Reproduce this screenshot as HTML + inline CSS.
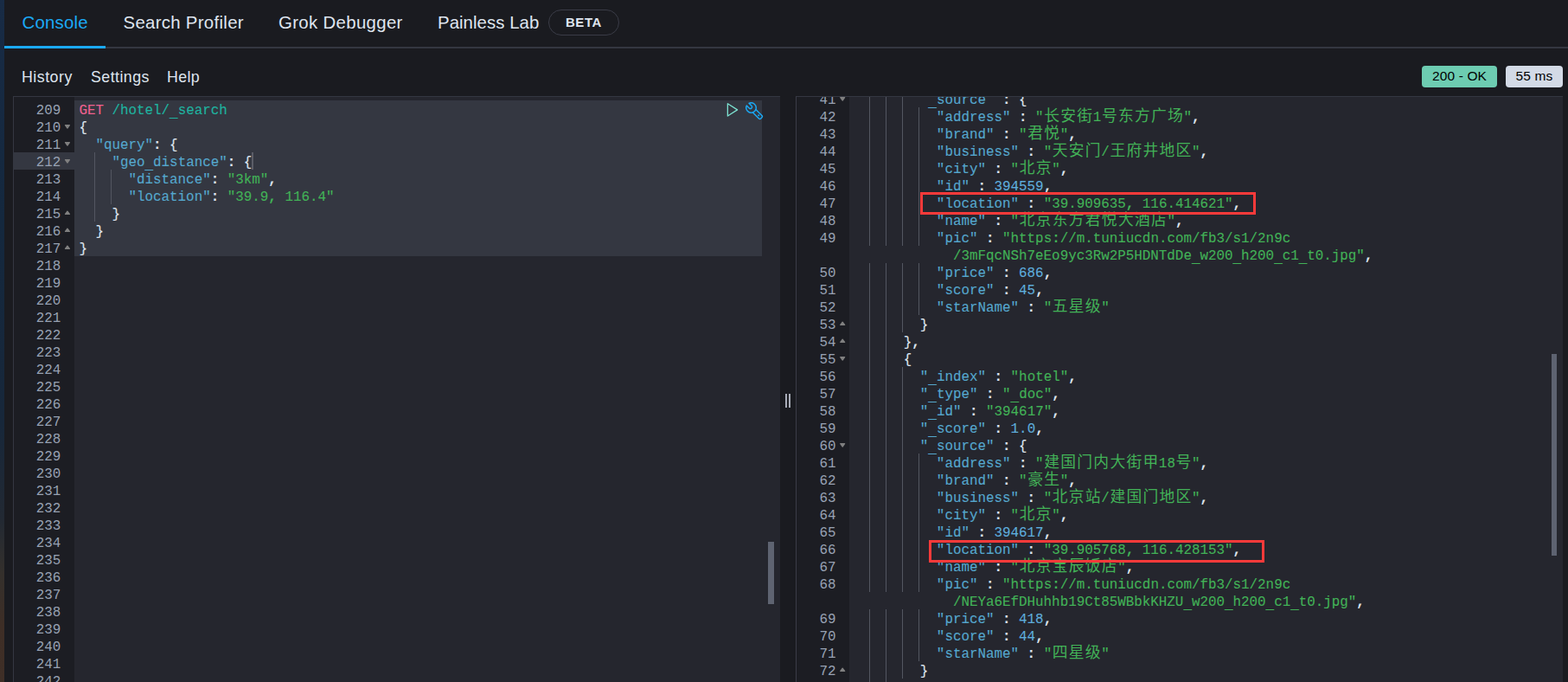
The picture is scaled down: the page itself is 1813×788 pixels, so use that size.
<!DOCTYPE html>
<html><head><meta charset="utf-8"><title>Dev Tools - Console</title>
<style>
*{box-sizing:border-box}
html,body{margin:0;padding:0}
body{width:1813px;height:788px;overflow:hidden;background:#1a1b20;position:relative;font-family:"Liberation Sans",sans-serif;color:#dfe5ef}
.abs{position:absolute}
.strip{position:absolute;left:0;top:0;width:5px;height:788px;background:linear-gradient(180deg,#182b45 0%,#14283e 32%,#17273a 62%,#222933 76%,#34302c 84%,#3e2e26 92%,#3f2f27 100%)}
.tab{position:absolute;top:12px;height:28px;line-height:28px;font-size:20.4px;color:#dfe5ef;white-space:nowrap;transform-origin:0 50%}
.sub{position:absolute;top:77px;height:24px;line-height:24px;font-size:17.8px;color:#dfe5ef;white-space:nowrap;transform-origin:0 50%}
.mono,.ln,.cl{font-family:"Liberation Mono",monospace;font-size:15.865px;line-height:20px;white-space:pre}
.ln{position:absolute;height:20px;text-align:right;color:#98a2b3;margin-top:2px}
.cl{position:absolute;height:20px;color:#dfe5ef;margin-top:2px;-webkit-text-stroke:0.12px currentColor}
.cl span{display:inline}
.g{color:#f0618f}.u{color:#1fb3a0}.k{color:#55a8ce}.s{color:#42b257}.p{color:#dfe5ef}.v{color:#5eaddc}
.cj{display:inline-block;width:19.04px;height:20px;vertical-align:top;position:relative;font-style:normal;font-family:"Liberation Mono","Noto Sans CJK SC",monospace;font-size:17.8px;line-height:19px;text-align:center;color:#42b257;overflow:visible;-webkit-text-stroke:0}
.cl u{text-decoration:none;position:relative;top:2.5px}
.cl b{font-weight:bold}
.gd{position:absolute;width:1px;height:20px;background:#535661}
.fold{position:absolute;fill:#808080;stroke:#808080;stroke-width:1.2;stroke-linejoin:round;pointer-events:none}
.actg{position:absolute;left:16px;width:70px;height:20px;background:#343741}
.pane{position:absolute;overflow:hidden}
.red{position:absolute;border:3px solid #fb3a3a}
</style></head>
<body>
<div class="strip"></div>

<!-- tabs -->
<div class="abs" style="left:5px;top:54px;width:1808px;height:2px;background:#343741"></div>
<div class="abs" style="left:5px;top:53px;width:117px;height:3px;background:#1ba9f5"></div>
<div class="tab" id="t1" style="left:25.5px;color:#1ba9f5;letter-spacing:0.2px">Console</div>
<div class="tab" id="t2" style="left:142.5px;letter-spacing:0.3px">Search Profiler</div>
<div class="tab" id="t3" style="left:322px;letter-spacing:0.33px">Grok Debugger</div>
<div class="tab" id="t4" style="left:506px;letter-spacing:0.05px">Painless Lab</div>
<div class="abs" id="beta" style="left:634px;top:11px;width:82px;height:30px;border:1px solid #3a3c47;border-radius:15px;font-size:15px;font-weight:bold;line-height:28px;text-align:center;letter-spacing:0.6px;color:#dfe5ef">BETA</div>

<!-- sub menu -->
<div class="sub" id="s1" style="left:25px;letter-spacing:0.5px">History</div>
<div class="sub" id="s2" style="left:105px;letter-spacing:0.45px">Settings</div>
<div class="sub" id="s3" style="left:193px;letter-spacing:0.35px">Help</div>

<!-- badges -->
<div class="abs" id="b1" style="left:1644px;top:76px;width:87px;height:25px;background:#6dccb1;border-radius:4px;color:#000;font-size:15.5px;line-height:24px;letter-spacing:0.15px;text-align:center;white-space:nowrap">200 - OK</div>
<div class="abs" id="b2" style="left:1741px;top:76px;width:66px;height:25px;background:#d3dae6;border-radius:4px;color:#000;font-size:15.5px;line-height:24px;letter-spacing:0.15px;text-align:center;white-space:nowrap">55 ms</div>

<!-- left editor -->
<div class="abs" style="left:15px;top:111px;width:887px;height:677px;background:#25262e;border-left:1px solid #343741;border-top:1px solid #343741"></div>
<div class="abs" style="left:16px;top:112px;width:70px;height:676px;background:#1c1d23"></div>
<div class="abs" style="left:86px;top:116px;width:795px;height:180px;background:#343741"></div>
<div class="pane" style="left:0;top:112px;width:902px;height:676px"><div style="position:absolute;left:0;top:-112px">
<div class="ln" style="top:116px;left:16px;width:54.400000000000006px">209</div>
<div class="cl" style="top:116px;left:91.4px"><span class="g">GET</span><span class="p"> </span><span class="u">/hotel/<u>_</u>search</span></div>
<div class="ln" style="top:136px;left:16px;width:54.400000000000006px">210</div>
<div class="cl" style="top:136px;left:91.4px"><span class="p">{</span></div>
<div class="ln" style="top:156px;left:16px;width:54.400000000000006px">211</div>
<div class="cl" style="top:156px;left:91.4px"><span class="p">  </span><span class="k">"query"</span><span class="p"><b>:</b> {</span></div>
<div class="actg" style="top:176px"></div>
<div class="ln" style="top:176px;left:16px;width:54.400000000000006px">212</div>
<div class="cl" style="top:176px;left:91.4px"><span class="p">    </span><span class="k">"geo<u>_</u>distance"</span><span class="p"><b>:</b> {</span></div>
<div class="gd" style="left:109.00px;top:176px"></div>
<div class="ln" style="top:196px;left:16px;width:54.400000000000006px">213</div>
<div class="cl" style="top:196px;left:91.4px"><span class="p">      </span><span class="k">"distance"</span><span class="p"><b>:</b> </span><span class="s">"3km"</span><span class="p"><b>,</b></span></div>
<div class="gd" style="left:109.00px;top:196px"></div>
<div class="gd" style="left:128.00px;top:196px"></div>
<div class="ln" style="top:216px;left:16px;width:54.400000000000006px">214</div>
<div class="cl" style="top:216px;left:91.4px"><span class="p">      </span><span class="k">"location"</span><span class="p"><b>:</b> </span><span class="s">"39.9<b>,</b> 116.4"</span></div>
<div class="gd" style="left:109.00px;top:216px"></div>
<div class="gd" style="left:128.00px;top:216px"></div>
<div class="ln" style="top:236px;left:16px;width:54.400000000000006px">215</div>
<div class="cl" style="top:236px;left:91.4px"><span class="p">    }</span></div>
<div class="gd" style="left:109.00px;top:236px"></div>
<div class="ln" style="top:256px;left:16px;width:54.400000000000006px">216</div>
<div class="cl" style="top:256px;left:91.4px"><span class="p">  }</span></div>
<div class="ln" style="top:276px;left:16px;width:54.400000000000006px">217</div>
<div class="cl" style="top:276px;left:91.4px"><span class="p">}</span></div>
<div class="ln" style="top:296px;left:16px;width:54.400000000000006px">218</div>
<div class="ln" style="top:316px;left:16px;width:54.400000000000006px">219</div>
<div class="ln" style="top:336px;left:16px;width:54.400000000000006px">220</div>
<div class="ln" style="top:356px;left:16px;width:54.400000000000006px">221</div>
<div class="ln" style="top:376px;left:16px;width:54.400000000000006px">222</div>
<div class="ln" style="top:396px;left:16px;width:54.400000000000006px">223</div>
<div class="ln" style="top:416px;left:16px;width:54.400000000000006px">224</div>
<div class="ln" style="top:436px;left:16px;width:54.400000000000006px">225</div>
<div class="ln" style="top:456px;left:16px;width:54.400000000000006px">226</div>
<div class="ln" style="top:476px;left:16px;width:54.400000000000006px">227</div>
<div class="ln" style="top:496px;left:16px;width:54.400000000000006px">228</div>
<div class="ln" style="top:516px;left:16px;width:54.400000000000006px">229</div>
<div class="ln" style="top:536px;left:16px;width:54.400000000000006px">230</div>
<div class="ln" style="top:556px;left:16px;width:54.400000000000006px">231</div>
<div class="ln" style="top:576px;left:16px;width:54.400000000000006px">232</div>
<div class="ln" style="top:596px;left:16px;width:54.400000000000006px">233</div>
<div class="ln" style="top:616px;left:16px;width:54.400000000000006px">234</div>
<div class="ln" style="top:636px;left:16px;width:54.400000000000006px">235</div>
<div class="ln" style="top:656px;left:16px;width:54.400000000000006px">236</div>
<div class="ln" style="top:676px;left:16px;width:54.400000000000006px">237</div>
<div class="ln" style="top:696px;left:16px;width:54.400000000000006px">238</div>
<div class="ln" style="top:716px;left:16px;width:54.400000000000006px">239</div>
<div class="ln" style="top:736px;left:16px;width:54.400000000000006px">240</div>
<div class="ln" style="top:756px;left:16px;width:54.400000000000006px">241</div>
<div class="ln" style="top:776px;left:16px;width:54.400000000000006px">242</div>
<svg class="fold" style="left:0;top:0" width="1813" height="788"><polygon points="75.50,144.60 80.40,144.60 77.95,148.10"/><polygon points="75.50,164.60 80.40,164.60 77.95,168.10"/><polygon points="75.50,184.60 80.40,184.60 77.95,188.10"/><polygon points="75.50,247.45 80.40,247.45 77.95,244.05"/><polygon points="75.50,267.45 80.40,267.45 77.95,264.05"/><polygon points="75.50,287.45 80.40,287.45 77.95,284.05"/></svg>
<div class="abs" style="left:291px;top:176px;width:2px;height:20px;background:#5b5d67"></div>
</div></div>
<!-- play + wrench -->
<svg class="abs" style="left:839px;top:117px" width="17" height="20" viewBox="0 0 17 20"><path d="M2.35 2.75 L13.6 9.9 L2.35 17.05 Z" fill="none" stroke="#7de2d1" stroke-width="1.3" stroke-linejoin="round"/></svg>
<svg class="abs" style="left:862px;top:118px" width="22" height="22" viewBox="0 0 22 22" fill="none" stroke="#1ba9f5" stroke-width="1.45" stroke-linejoin="round" stroke-linecap="round">
<g transform="rotate(45)">
<path d="M3.75 1.9 L7.9 1.9 A1.9 1.9 0 0 0 7.9 -1.9 L3.75 -1.9 A5.8 5.8 0 0 1 14.4 -2.45 L24.3 -2.45 A1.6 1.6 0 0 1 25.9 -0.85 L25.9 0.85 A1.6 1.6 0 0 1 24.3 2.45 L14.4 2.45 A5.8 5.8 0 0 1 3.75 1.9 Z"/>
<path d="M14.4 -2.45 A5.8 5.8 0 0 1 14.4 2.45"/>
<circle cx="21.5" cy="0" r="1" fill="#1ba9f5" stroke="none"/>
</g></svg>
<!-- left scrollbar thumb -->
<div class="abs" style="left:888px;top:626px;width:7px;height:72px;background:#5e6371"></div>

<!-- resizer -->
<div class="abs" style="left:908px;top:455px;width:2.4px;height:16px;background:#a9adb8"></div>
<div class="abs" style="left:911.8px;top:455px;width:2.4px;height:16px;background:#a9adb8"></div>

<!-- right editor -->
<div class="abs" style="left:920px;top:111px;width:887px;height:677px;background:#25262e;border-left:1px solid #3a3c47;border-top:1px solid #343741"></div>
<div class="abs" style="left:921px;top:112px;width:61px;height:676px;background:#1c1d23"></div>
<div class="pane" style="left:920px;top:112px;width:887px;height:676px"><div style="position:absolute;left:-920px;top:-112px">
<div class="ln" style="top:104px;left:921px;width:45.60000000000002px">41</div>
<div class="cl" style="top:104px;left:987.7px"><span class="p">        </span><span class="k"> <u>_</u>source </span><span class="p"> <b>:</b> {</span></div>
<div class="gd" style="left:1005.00px;top:104px"></div>
<div class="gd" style="left:1024.00px;top:104px"></div>
<div class="gd" style="left:1043.00px;top:104px"></div>
<div class="ln" style="top:124px;left:921px;width:45.60000000000002px">42</div>
<div class="cl" style="top:124px;left:987.7px"><span class="p">          </span><span class="k">"address"</span><span class="p"> <b>:</b> </span><span class="s">"<i class="cj">长</i><i class="cj">安</i><i class="cj">街</i>1<i class="cj">号</i><i class="cj">东</i><i class="cj">方</i><i class="cj">广</i><i class="cj">场</i>"</span><span class="p"><b>,</b></span></div>
<div class="gd" style="left:1005.00px;top:124px"></div>
<div class="gd" style="left:1024.00px;top:124px"></div>
<div class="gd" style="left:1043.00px;top:124px"></div>
<div class="gd" style="left:1062.00px;top:124px"></div>
<div class="ln" style="top:144px;left:921px;width:45.60000000000002px">43</div>
<div class="cl" style="top:144px;left:987.7px"><span class="p">          </span><span class="k">"brand"</span><span class="p"> <b>:</b> </span><span class="s">"<i class="cj">君</i><i class="cj">悦</i>"</span><span class="p"><b>,</b></span></div>
<div class="gd" style="left:1005.00px;top:144px"></div>
<div class="gd" style="left:1024.00px;top:144px"></div>
<div class="gd" style="left:1043.00px;top:144px"></div>
<div class="gd" style="left:1062.00px;top:144px"></div>
<div class="ln" style="top:164px;left:921px;width:45.60000000000002px">44</div>
<div class="cl" style="top:164px;left:987.7px"><span class="p">          </span><span class="k">"business"</span><span class="p"> <b>:</b> </span><span class="s">"<i class="cj">天</i><i class="cj">安</i><i class="cj">门</i>/<i class="cj">王</i><i class="cj">府</i><i class="cj">井</i><i class="cj">地</i><i class="cj">区</i>"</span><span class="p"><b>,</b></span></div>
<div class="gd" style="left:1005.00px;top:164px"></div>
<div class="gd" style="left:1024.00px;top:164px"></div>
<div class="gd" style="left:1043.00px;top:164px"></div>
<div class="gd" style="left:1062.00px;top:164px"></div>
<div class="ln" style="top:184px;left:921px;width:45.60000000000002px">45</div>
<div class="cl" style="top:184px;left:987.7px"><span class="p">          </span><span class="k">"city"</span><span class="p"> <b>:</b> </span><span class="s">"<i class="cj">北</i><i class="cj">京</i>"</span><span class="p"><b>,</b></span></div>
<div class="gd" style="left:1005.00px;top:184px"></div>
<div class="gd" style="left:1024.00px;top:184px"></div>
<div class="gd" style="left:1043.00px;top:184px"></div>
<div class="gd" style="left:1062.00px;top:184px"></div>
<div class="ln" style="top:204px;left:921px;width:45.60000000000002px">46</div>
<div class="cl" style="top:204px;left:987.7px"><span class="p">          </span><span class="k">"id"</span><span class="p"> <b>:</b> </span><span class="v">394559</span><span class="p"><b>,</b></span></div>
<div class="gd" style="left:1005.00px;top:204px"></div>
<div class="gd" style="left:1024.00px;top:204px"></div>
<div class="gd" style="left:1043.00px;top:204px"></div>
<div class="gd" style="left:1062.00px;top:204px"></div>
<div class="ln" style="top:224px;left:921px;width:45.60000000000002px">47</div>
<div class="cl" style="top:224px;left:987.7px"><span class="p">          </span><span class="k">"location"</span><span class="p"> <b>:</b> </span><span class="s">"39.909635<b>,</b> 116.414621"</span><span class="p"><b>,</b></span></div>
<div class="gd" style="left:1005.00px;top:224px"></div>
<div class="gd" style="left:1024.00px;top:224px"></div>
<div class="gd" style="left:1043.00px;top:224px"></div>
<div class="gd" style="left:1062.00px;top:224px"></div>
<div class="ln" style="top:244px;left:921px;width:45.60000000000002px">48</div>
<div class="cl" style="top:244px;left:987.7px"><span class="p">          </span><span class="k">"name"</span><span class="p"> <b>:</b> </span><span class="s">"<i class="cj">北</i><i class="cj">京</i><i class="cj">东</i><i class="cj">方</i><i class="cj">君</i><i class="cj">悦</i><i class="cj">大</i><i class="cj">酒</i><i class="cj">店</i>"</span><span class="p"><b>,</b></span></div>
<div class="gd" style="left:1005.00px;top:244px"></div>
<div class="gd" style="left:1024.00px;top:244px"></div>
<div class="gd" style="left:1043.00px;top:244px"></div>
<div class="gd" style="left:1062.00px;top:244px"></div>
<div class="ln" style="top:264px;left:921px;width:45.60000000000002px">49</div>
<div class="cl" style="top:264px;left:987.7px"><span class="p">          </span><span class="k">"pic"</span><span class="p"> <b>:</b> </span><span class="s">"https<b>:</b></span><span class="s">//m.tuniucdn.com/fb3/s1/2n9c</span></div>
<div class="gd" style="left:1005.00px;top:264px"></div>
<div class="gd" style="left:1024.00px;top:264px"></div>
<div class="gd" style="left:1043.00px;top:264px"></div>
<div class="gd" style="left:1062.00px;top:264px"></div>
<div class="cl" style="top:284px;left:987.7px"><span class="p">            </span><span class="s">/3mFqcNSh7eEo9yc3Rw2P5HDNTdDe<u>_</u>w200<u>_</u>h200<u>_</u>c1<u>_</u>t0.jpg"</span><span class="p"><b>,</b></span></div>
<div class="ln" style="top:304px;left:921px;width:45.60000000000002px">50</div>
<div class="cl" style="top:304px;left:987.7px"><span class="p">          </span><span class="k">"price"</span><span class="p"> <b>:</b> </span><span class="v">686</span><span class="p"><b>,</b></span></div>
<div class="gd" style="left:1005.00px;top:304px"></div>
<div class="gd" style="left:1024.00px;top:304px"></div>
<div class="gd" style="left:1043.00px;top:304px"></div>
<div class="gd" style="left:1062.00px;top:304px"></div>
<div class="ln" style="top:324px;left:921px;width:45.60000000000002px">51</div>
<div class="cl" style="top:324px;left:987.7px"><span class="p">          </span><span class="k">"score"</span><span class="p"> <b>:</b> </span><span class="v">45</span><span class="p"><b>,</b></span></div>
<div class="gd" style="left:1005.00px;top:324px"></div>
<div class="gd" style="left:1024.00px;top:324px"></div>
<div class="gd" style="left:1043.00px;top:324px"></div>
<div class="gd" style="left:1062.00px;top:324px"></div>
<div class="ln" style="top:344px;left:921px;width:45.60000000000002px">52</div>
<div class="cl" style="top:344px;left:987.7px"><span class="p">          </span><span class="k">"starName"</span><span class="p"> <b>:</b> </span><span class="s">"<i class="cj">五</i><i class="cj">星</i><i class="cj">级</i>"</span></div>
<div class="gd" style="left:1005.00px;top:344px"></div>
<div class="gd" style="left:1024.00px;top:344px"></div>
<div class="gd" style="left:1043.00px;top:344px"></div>
<div class="gd" style="left:1062.00px;top:344px"></div>
<div class="ln" style="top:364px;left:921px;width:45.60000000000002px">53</div>
<div class="cl" style="top:364px;left:987.7px"><span class="p">        }</span></div>
<div class="gd" style="left:1005.00px;top:364px"></div>
<div class="gd" style="left:1024.00px;top:364px"></div>
<div class="gd" style="left:1043.00px;top:364px"></div>
<div class="ln" style="top:384px;left:921px;width:45.60000000000002px">54</div>
<div class="cl" style="top:384px;left:987.7px"><span class="p">      }<b>,</b></span></div>
<div class="gd" style="left:1005.00px;top:384px"></div>
<div class="gd" style="left:1024.00px;top:384px"></div>
<div class="ln" style="top:404px;left:921px;width:45.60000000000002px">55</div>
<div class="cl" style="top:404px;left:987.7px"><span class="p">      {</span></div>
<div class="gd" style="left:1005.00px;top:404px"></div>
<div class="gd" style="left:1024.00px;top:404px"></div>
<div class="ln" style="top:424px;left:921px;width:45.60000000000002px">56</div>
<div class="cl" style="top:424px;left:987.7px"><span class="p">        </span><span class="k">"<u>_</u>index"</span><span class="p"> <b>:</b> </span><span class="s">"hotel"</span><span class="p"><b>,</b></span></div>
<div class="gd" style="left:1005.00px;top:424px"></div>
<div class="gd" style="left:1024.00px;top:424px"></div>
<div class="gd" style="left:1043.00px;top:424px"></div>
<div class="ln" style="top:444px;left:921px;width:45.60000000000002px">57</div>
<div class="cl" style="top:444px;left:987.7px"><span class="p">        </span><span class="k">"<u>_</u>type"</span><span class="p"> <b>:</b> </span><span class="s">"<u>_</u>doc"</span><span class="p"><b>,</b></span></div>
<div class="gd" style="left:1005.00px;top:444px"></div>
<div class="gd" style="left:1024.00px;top:444px"></div>
<div class="gd" style="left:1043.00px;top:444px"></div>
<div class="ln" style="top:464px;left:921px;width:45.60000000000002px">58</div>
<div class="cl" style="top:464px;left:987.7px"><span class="p">        </span><span class="k">"<u>_</u>id"</span><span class="p"> <b>:</b> </span><span class="s">"394617"</span><span class="p"><b>,</b></span></div>
<div class="gd" style="left:1005.00px;top:464px"></div>
<div class="gd" style="left:1024.00px;top:464px"></div>
<div class="gd" style="left:1043.00px;top:464px"></div>
<div class="ln" style="top:484px;left:921px;width:45.60000000000002px">59</div>
<div class="cl" style="top:484px;left:987.7px"><span class="p">        </span><span class="k">"<u>_</u>score"</span><span class="p"> <b>:</b> </span><span class="v">1.0</span><span class="p"><b>,</b></span></div>
<div class="gd" style="left:1005.00px;top:484px"></div>
<div class="gd" style="left:1024.00px;top:484px"></div>
<div class="gd" style="left:1043.00px;top:484px"></div>
<div class="ln" style="top:504px;left:921px;width:45.60000000000002px">60</div>
<div class="cl" style="top:504px;left:987.7px"><span class="p">        </span><span class="k">"<u>_</u>source"</span><span class="p"> <b>:</b> {</span></div>
<div class="gd" style="left:1005.00px;top:504px"></div>
<div class="gd" style="left:1024.00px;top:504px"></div>
<div class="gd" style="left:1043.00px;top:504px"></div>
<div class="ln" style="top:524px;left:921px;width:45.60000000000002px">61</div>
<div class="cl" style="top:524px;left:987.7px"><span class="p">          </span><span class="k">"address"</span><span class="p"> <b>:</b> </span><span class="s">"<i class="cj">建</i><i class="cj">国</i><i class="cj">门</i><i class="cj">内</i><i class="cj">大</i><i class="cj">街</i><i class="cj">甲</i>18<i class="cj">号</i>"</span><span class="p"><b>,</b></span></div>
<div class="gd" style="left:1005.00px;top:524px"></div>
<div class="gd" style="left:1024.00px;top:524px"></div>
<div class="gd" style="left:1043.00px;top:524px"></div>
<div class="gd" style="left:1062.00px;top:524px"></div>
<div class="ln" style="top:544px;left:921px;width:45.60000000000002px">62</div>
<div class="cl" style="top:544px;left:987.7px"><span class="p">          </span><span class="k">"brand"</span><span class="p"> <b>:</b> </span><span class="s">"<i class="cj">豪</i><i class="cj">生</i>"</span><span class="p"><b>,</b></span></div>
<div class="gd" style="left:1005.00px;top:544px"></div>
<div class="gd" style="left:1024.00px;top:544px"></div>
<div class="gd" style="left:1043.00px;top:544px"></div>
<div class="gd" style="left:1062.00px;top:544px"></div>
<div class="ln" style="top:564px;left:921px;width:45.60000000000002px">63</div>
<div class="cl" style="top:564px;left:987.7px"><span class="p">          </span><span class="k">"business"</span><span class="p"> <b>:</b> </span><span class="s">"<i class="cj">北</i><i class="cj">京</i><i class="cj">站</i>/<i class="cj">建</i><i class="cj">国</i><i class="cj">门</i><i class="cj">地</i><i class="cj">区</i>"</span><span class="p"><b>,</b></span></div>
<div class="gd" style="left:1005.00px;top:564px"></div>
<div class="gd" style="left:1024.00px;top:564px"></div>
<div class="gd" style="left:1043.00px;top:564px"></div>
<div class="gd" style="left:1062.00px;top:564px"></div>
<div class="ln" style="top:584px;left:921px;width:45.60000000000002px">64</div>
<div class="cl" style="top:584px;left:987.7px"><span class="p">          </span><span class="k">"city"</span><span class="p"> <b>:</b> </span><span class="s">"<i class="cj">北</i><i class="cj">京</i>"</span><span class="p"><b>,</b></span></div>
<div class="gd" style="left:1005.00px;top:584px"></div>
<div class="gd" style="left:1024.00px;top:584px"></div>
<div class="gd" style="left:1043.00px;top:584px"></div>
<div class="gd" style="left:1062.00px;top:584px"></div>
<div class="ln" style="top:604px;left:921px;width:45.60000000000002px">65</div>
<div class="cl" style="top:604px;left:987.7px"><span class="p">          </span><span class="k">"id"</span><span class="p"> <b>:</b> </span><span class="v">394617</span><span class="p"><b>,</b></span></div>
<div class="gd" style="left:1005.00px;top:604px"></div>
<div class="gd" style="left:1024.00px;top:604px"></div>
<div class="gd" style="left:1043.00px;top:604px"></div>
<div class="gd" style="left:1062.00px;top:604px"></div>
<div class="ln" style="top:624px;left:921px;width:45.60000000000002px">66</div>
<div class="cl" style="top:624px;left:987.7px"><span class="p">          </span><span class="k">"location"</span><span class="p"> <b>:</b> </span><span class="s">"39.905768<b>,</b> 116.428153"</span><span class="p"><b>,</b></span></div>
<div class="gd" style="left:1005.00px;top:624px"></div>
<div class="gd" style="left:1024.00px;top:624px"></div>
<div class="gd" style="left:1043.00px;top:624px"></div>
<div class="gd" style="left:1062.00px;top:624px"></div>
<div class="ln" style="top:644px;left:921px;width:45.60000000000002px">67</div>
<div class="cl" style="top:644px;left:987.7px"><span class="p">          </span><span class="k">"name"</span><span class="p"> <b>:</b> </span><span class="s">"<i class="cj">北</i><i class="cj">京</i><i class="cj">宝</i><i class="cj">辰</i><i class="cj">饭</i><i class="cj">店</i>"</span><span class="p"><b>,</b></span></div>
<div class="gd" style="left:1005.00px;top:644px"></div>
<div class="gd" style="left:1024.00px;top:644px"></div>
<div class="gd" style="left:1043.00px;top:644px"></div>
<div class="gd" style="left:1062.00px;top:644px"></div>
<div class="ln" style="top:664px;left:921px;width:45.60000000000002px">68</div>
<div class="cl" style="top:664px;left:987.7px"><span class="p">          </span><span class="k">"pic"</span><span class="p"> <b>:</b> </span><span class="s">"https<b>:</b></span><span class="s">//m.tuniucdn.com/fb3/s1/2n9c</span></div>
<div class="gd" style="left:1005.00px;top:664px"></div>
<div class="gd" style="left:1024.00px;top:664px"></div>
<div class="gd" style="left:1043.00px;top:664px"></div>
<div class="gd" style="left:1062.00px;top:664px"></div>
<div class="cl" style="top:684px;left:987.7px"><span class="p">            </span><span class="s">/NEYa6EfDHuhhb19Ct85WBbkKHZU<u>_</u>w200<u>_</u>h200<u>_</u>c1<u>_</u>t0.jpg"</span><span class="p"><b>,</b></span></div>
<div class="ln" style="top:704px;left:921px;width:45.60000000000002px">69</div>
<div class="cl" style="top:704px;left:987.7px"><span class="p">          </span><span class="k">"price"</span><span class="p"> <b>:</b> </span><span class="v">418</span><span class="p"><b>,</b></span></div>
<div class="gd" style="left:1005.00px;top:704px"></div>
<div class="gd" style="left:1024.00px;top:704px"></div>
<div class="gd" style="left:1043.00px;top:704px"></div>
<div class="gd" style="left:1062.00px;top:704px"></div>
<div class="ln" style="top:724px;left:921px;width:45.60000000000002px">70</div>
<div class="cl" style="top:724px;left:987.7px"><span class="p">          </span><span class="k">"score"</span><span class="p"> <b>:</b> </span><span class="v">44</span><span class="p"><b>,</b></span></div>
<div class="gd" style="left:1005.00px;top:724px"></div>
<div class="gd" style="left:1024.00px;top:724px"></div>
<div class="gd" style="left:1043.00px;top:724px"></div>
<div class="gd" style="left:1062.00px;top:724px"></div>
<div class="ln" style="top:744px;left:921px;width:45.60000000000002px">71</div>
<div class="cl" style="top:744px;left:987.7px"><span class="p">          </span><span class="k">"starName"</span><span class="p"> <b>:</b> </span><span class="s">"<i class="cj">四</i><i class="cj">星</i><i class="cj">级</i>"</span></div>
<div class="gd" style="left:1005.00px;top:744px"></div>
<div class="gd" style="left:1024.00px;top:744px"></div>
<div class="gd" style="left:1043.00px;top:744px"></div>
<div class="gd" style="left:1062.00px;top:744px"></div>
<div class="ln" style="top:764px;left:921px;width:45.60000000000002px">72</div>
<div class="cl" style="top:764px;left:987.7px"><span class="p">        }</span></div>
<div class="gd" style="left:1005.00px;top:764px"></div>
<div class="gd" style="left:1024.00px;top:764px"></div>
<div class="gd" style="left:1043.00px;top:764px"></div>
<div class="ln" style="top:784px;left:921px;width:45.60000000000002px">73</div>
<div class="cl" style="top:784px;left:987.7px"><span class="p">      }<b>,</b></span></div>
<div class="gd" style="left:1005.00px;top:784px"></div>
<div class="gd" style="left:1024.00px;top:784px"></div>
<svg class="fold" style="left:0;top:0" width="1813" height="788"><polygon points="971.75,112.60 976.65,112.60 974.20,116.10"/><polygon points="971.75,375.45 976.65,375.45 974.20,372.05"/><polygon points="971.75,395.45 976.65,395.45 974.20,392.05"/><polygon points="971.75,412.60 976.65,412.60 974.20,416.10"/><polygon points="971.75,512.60 976.65,512.60 974.20,516.10"/><polygon points="971.75,775.45 976.65,775.45 974.20,772.05"/><polygon points="971.75,795.45 976.65,795.45 974.20,792.05"/></svg>
</div></div>
<div class="abs" style="left:1794px;top:409px;width:6px;height:233px;background:#5e6371"></div>
<div class="red" style="left:1064px;top:222px;width:388px;height:26px"></div>
<div class="red" style="left:1074px;top:624px;width:388px;height:26px"></div>
</body></html>
